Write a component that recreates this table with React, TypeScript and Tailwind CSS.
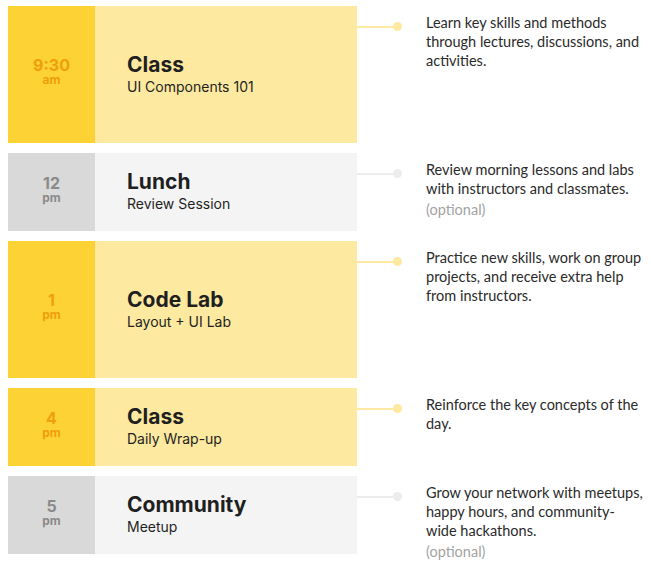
import React from 'react';

type Item = {
  time: string;
  period: string;
  title: string;
  subtitle: string;
  text: React.ReactNode;
  optional?: boolean;
  tall?: boolean;
  muted?: boolean;
};

const items: Item[] = [
  {
    time: '9:30',
    period: 'am',
    title: 'Class',
    subtitle: 'UI Components 101',
    text: 'Learn key skills and methods through lectures, discussions, and activities.',
    tall: true,
  },
  {
    time: '12',
    period: 'pm',
    title: 'Lunch',
    subtitle: 'Review Session',
    text: 'Review morning lessons and labs with instructors and classmates.',
    optional: true,
    muted: true,
  },
  {
    time: '1',
    period: 'pm',
    title: 'Code Lab',
    subtitle: 'Layout + UI Lab',
    text: 'Practice new skills, work on group projects, and receive extra help from instructors.',
    tall: true,
  },
  {
    time: '4',
    period: 'pm',
    title: 'Class',
    subtitle: 'Daily Wrap-up',
    text: 'Reinforce the key concepts of the day.',
  },
  {
    time: '5',
    period: 'pm',
    title: 'Community',
    subtitle: 'Meetup',
    text: (
      <>
        Grow your network with meetups, happy hours, and community-
        <br />
        wide hackathons.
      </>
    ),
    optional: true,
    muted: true,
  },
];

const ScheduleRow: React.FC<{ item: Item }> = ({ item }) => {
  const muted = item.muted;
  return (
    <div className={`flex items-start ${item.tall ? 'h-[137px]' : 'h-[78px]'}`}>
      <div className={`flex h-full w-[349px] shrink-0 ${muted ? 'bg-[#f4f4f4]' : 'bg-[#fde9a0]'}`}>
        <div
          className={`flex w-[87px] flex-col items-center justify-center pb-[6px] font-bold ${
            muted ? 'bg-[#d9d9d9] text-[#8a8a8a]' : 'bg-[#fcd234] text-[#f09e0c]'
          }`}
        >
          <span className="text-[16px] leading-[17px]">{item.time}</span>
          <span className="text-[12px] leading-[12px]">{item.period}</span>
        </div>
        <div className="flex flex-col justify-center pl-[32px] text-[#1f1f1f]">
          <div className="text-[21px] leading-[24px] font-bold">{item.title}</div>
          <div className="text-[14px] leading-[20px]">{item.subtitle}</div>
        </div>
      </div>
      <div className="mt-[16px] flex shrink-0 items-center">
        <div className={`h-[2px] w-[37px] ${muted ? 'bg-[#ececec]' : 'bg-[#fde9a0]'}`} />
        <div className={`-ml-px h-[9px] w-[9px] rounded-full ${muted ? 'bg-[#ececec]' : 'bg-[#fde9a0]'}`} />
      </div>
      <div className="ml-[24px] w-[222px] shrink-0 pt-[7px] font-['Lato',sans-serif] text-[14.5px] leading-[19px] text-[#2a2a2a]">
        <p>{item.text}</p>
        {item.optional && <p className="mt-[2px] text-[#a3a3a3]">(optional)</p>}
      </div>
    </div>
  );
};

const App: React.FC = () => {
  return (
    <div className="min-h-screen bg-white pl-[8px] pt-[6px] font-['Inter',sans-serif]">
      <div className="flex flex-col gap-[10px]">
        {items.map((item, i) => (
          <ScheduleRow key={i} item={item} />
        ))}
      </div>
    </div>
  );
};

export default App;
